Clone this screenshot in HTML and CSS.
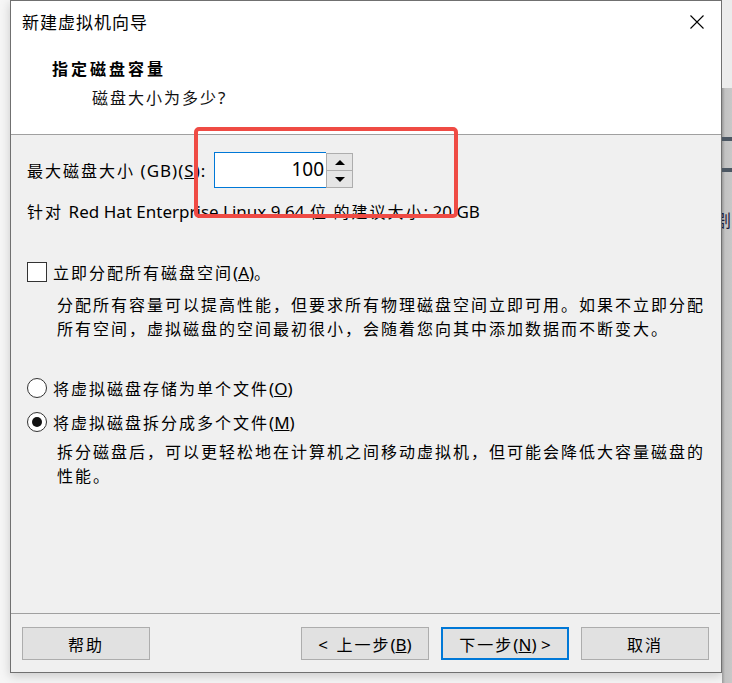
FILE: index.html
```html
<!DOCTYPE html>
<html lang="zh-CN">
<head>
<meta charset="utf-8">
<title>新建虚拟机向导</title>
<link rel="stylesheet" href="styles.css">
</head>
<body>
<div class="screen">
  <div class="dialog">
    <div class="header">
      <div class="titlebar">
        <span class="title">新建虚拟机向导</span>
        <svg class="close" width="14" height="14" viewBox="0 0 14 14"><path d="M0.5 0.5 L13.5 13.5 M13.5 0.5 L0.5 13.5" stroke="#000" stroke-width="1.1" fill="none"/></svg>
      </div>
      <div class="heading">指定磁盘容量</div>
      <div class="subheading">磁盘大小为多少<span class="lat">?</span></div>
    </div>
    <div class="body">
      <div class="size-row">
        <span class="label">最大磁盘大小 <span class="lat wide">(GB)(<u>S</u>):</span></span>
        <div class="spin">
          <div class="spin-input">100</div>
          <div class="spin-btns">
            <div class="spin-btn"><span class="arrow-up"></span></div>
            <div class="spin-btn"><span class="arrow-down"></span></div>
          </div>
        </div>
      </div>
      <div class="recommend">针对 <span class="lat">Red Hat Enterprise Linux 9 64</span> 位 的建议大小<span class="lat">: 20 GB</span></div>
      <div class="option opt-check">
        <span class="checkbox"></span>
        <span class="opt-label">立即分配所有磁盘空间<span class="lat">(<u>A</u>)</span>。</span>
      </div>
      <p class="desc desc-1">分配所有容量可以提高性能，但要求所有物理磁盘空间立即可用。如果不立即分配所有空间，虚拟磁盘的空间最初很小，会随着您向其中添加数据而不断变大。</p>
      <div class="option opt-radio1">
        <span class="radio"></span>
        <span class="opt-label">将虚拟磁盘存储为单个文件<span class="lat">(<u>O</u>)</span></span>
      </div>
      <div class="option opt-radio2">
        <span class="radio checked"></span>
        <span class="opt-label">将虚拟磁盘拆分成多个文件<span class="lat">(<u>M</u>)</span></span>
      </div>
      <p class="desc desc-2">拆分磁盘后，可以更轻松地在计算机之间移动虚拟机，但可能会降低大容量磁盘的性能。</p>
    </div>
    <div class="footer">
      <button class="btn">帮助</button>
      <div class="btn-group">
        <button class="btn btn-prev"><span class="lat">&lt; </span>上一步<span class="lat">(<u>B</u>)</span></button>
        <button class="btn btn-default">下一步<span class="lat">(<u>N</u>) &gt;</span></button>
        <button class="btn">取消</button>
      </div>
    </div>
  </div>
  <div class="side">
    <div class="side-top"></div>
    <div class="side-bottom">
      <div class="band band-1"></div>
      <div class="band band-2"></div>
      <div class="side-char">剧</div>
    </div>
  </div>
  <div class="annot"></div>
</div>
</body>
</html>
```

FILE: styles.css
```css
html, body {
  margin: 0;
  padding: 0;
  background: #f6f6f6;
  width: 732px;
  height: 683px;
  overflow: hidden;
}

.screen {
  position: relative;
  display: flex;
  padding-left: 10px;
  width: 732px;
  height: 683px;
  box-sizing: border-box;
  font-family: "Noto Sans", "Noto Sans CJK SC", sans-serif;
  color: #000;
}

.lat {
  font-family: "Noto Sans", sans-serif;
  font-size: 17px;
  letter-spacing: 0;
}

.lat.wide {
  letter-spacing: 1px;
}

.dialog {
  width: 712px;
  height: 673px;
  box-sizing: border-box;
  border: 1px solid #707070;
  background: #f0f0f0;
  display: flex;
  flex-direction: column;
  box-shadow: 0 3px 10px rgba(0, 0, 0, 0.18);
}

.header {
  height: 134px;
  box-sizing: border-box;
  background: #fff;
  border-bottom: 1px solid #a0a0a0;
  padding-top: 9px;
  font-family: "Noto Sans CJK SC", sans-serif;
}

.titlebar {
  display: flex;
  align-items: center;
  justify-content: space-between;
  padding-left: 11px;
  padding-right: 17px;
  height: 24px;
}

.title {
  font-size: 17px;
  letter-spacing: 1px;
  line-height: 24px;
}

.close {
  display: block;
}

.heading {
  margin-top: 22px;
  padding-left: 41px;
  font-size: 16px;
  letter-spacing: 3px;
  font-weight: bold;
  line-height: 24px;
}

.subheading {
  margin-top: 5px;
  padding-left: 81px;
  font-size: 16px;
  letter-spacing: 2px;
  line-height: 24px;
  color: #111;
}

.body {
  flex: 1;
  padding-left: 16px;
  padding-right: 12px;
  font-size: 16px;
  line-height: 24px;
}

.body, .footer {
  font-family: "Noto Sans CJK SC", sans-serif;
}

.size-row {
  margin-top: 17px;
  display: flex;
  align-items: center;
  height: 36px;
}

.label {
  letter-spacing: 2px;
  width: 187px;
  white-space: nowrap;
}

.spin {
  display: flex;
  height: 36px;
}

.spin-input {
  width: 112px;
  box-sizing: border-box;
  border: 1px solid #0078d7;
  border-right: none;
  background: #fff;
  text-align: right;
  padding-right: 2px;
  font-size: 19px;
  line-height: 32px;
  font-family: "Noto Sans", sans-serif;
}

.spin-btns {
  width: 27px;
  display: flex;
  flex-direction: column;
  padding-top: 1px;
  box-sizing: border-box;
}

.spin-btn {
  flex: 1;
  border: 1px solid #adadad;
  background: #e5e5e5;
  display: flex;
  align-items: center;
  justify-content: center;
}

.spin-btn + .spin-btn {
  border-top: none;
}

.arrow-up {
  width: 0;
  height: 0;
  border-left: 5px solid transparent;
  border-right: 5px solid transparent;
  border-bottom: 5px solid #000;
}

.arrow-down {
  width: 0;
  height: 0;
  border-left: 5px solid transparent;
  border-right: 5px solid transparent;
  border-top: 5px solid #000;
}

.recommend {
  margin-top: 11px;
  letter-spacing: 2px;
}

.option {
  display: flex;
  align-items: center;
  height: 20px;
}

.opt-check {
  margin-top: 38px;
}

.opt-radio1 {
  margin-top: 38px;
}

.opt-radio2 {
  margin-top: 14px;
}

.opt-label {
  margin-left: 6px;
  letter-spacing: 2px;
}

.checkbox {
  width: 20px;
  height: 20px;
  box-sizing: border-box;
  border: 1px solid #333;
  background: #fff;
}

.radio {
  width: 20px;
  height: 20px;
  box-sizing: border-box;
  border: 1px solid #333;
  border-radius: 50%;
  background: #fff;
  display: flex;
  align-items: center;
  justify-content: center;
}

.radio.checked::after {
  content: "";
  width: 10px;
  height: 10px;
  border-radius: 50%;
  background: #111;
}

.desc {
  margin: 0;
  padding-left: 30px;
  letter-spacing: 2px;
  line-height: 24px;
}

.desc-1 {
  margin-top: 10px;
}

.desc-2 {
  margin-top: 7px;
}

.footer {
  height: 59px;
  box-sizing: border-box;
  border-top: 1px solid #a0a0a0;
  margin-right: 1px;
  padding: 13px 11px 0 11px;
  display: flex;
  align-items: flex-start;
  justify-content: space-between;
}

.btn-group {
  display: flex;
  gap: 12px;
}

.btn {
  width: 128px;
  height: 33px;
  box-sizing: border-box;
  border: 1px solid #adadad;
  background: #e1e1e1;
  font-family: "Noto Sans CJK SC", sans-serif;
  font-size: 16px;
  letter-spacing: 2px;
  color: #000;
  padding: 0;
  margin: 0;
}

.btn-prev .lat:first-child {
  letter-spacing: 2px;
}

.btn-default {
  border: 2px solid #0078d7;
}

.side {
  width: 10px;
  height: 683px;
  display: flex;
  flex-direction: column;
  overflow: hidden;
}

.side-top {
  height: 88px;
  background: #ececec;
}

.side-bottom {
  flex: 1;
  background: linear-gradient(to right, #9a9a9a 0, #c2c2c2 3px, #c8c8c8 100%);
}

.band {
  height: 4px;
  background: #4c5763;
}

.band-1 {
  margin-top: 49px;
}

.band-2 {
  margin-top: 27px;
}

.side-char {
  margin-top: 38px;
  margin-left: -8px;
  font-family: "Noto Sans CJK SC", sans-serif;
  font-size: 17px;
  line-height: 20px;
  color: #1b1b3a;
}

.annot {
  position: absolute;
  left: 194px;
  top: 127px;
  width: 264px;
  height: 91px;
  box-sizing: border-box;
  border: 4px solid #ef4b44;
  border-radius: 5px;
}
```
